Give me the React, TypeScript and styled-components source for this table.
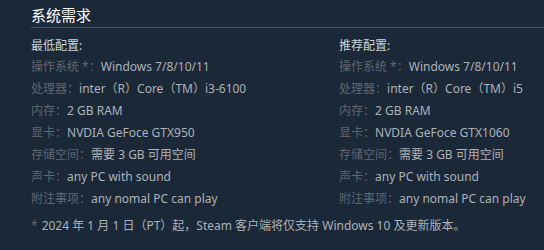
import React from 'react';
import styled, { createGlobalStyle } from 'styled-components';

const GlobalStyle = createGlobalStyle`
  html, body {
    margin: 0;
    padding: 0;
    background: #1b2838;
  }
  body {
    font-family: 'Noto Sans', 'Noto Sans CJK SC', sans-serif;
  }
`;

const Page = styled.div`
  width: 544px;
  height: 250px;
  overflow: hidden;
  background: #1b2838;
  padding: 6px 0 0 31px;
  box-sizing: border-box;
`;

const Title = styled.h2`
  margin: 0;
  padding-bottom: 3px;
  font-size: 15px;
  line-height: 18px;
  font-weight: normal;
  color: #ffffff;
  border-bottom: 1px solid #3d5d77;
`;

const Columns = styled.div`
  display: grid;
  grid-template-columns: 308px 1fr;
  padding-top: 7px;
`;

const Column = styled.div`
  display: flex;
  flex-direction: column;
  white-space: nowrap;
`;

const ColumnHead = styled.div`
  font-size: 12px;
  line-height: 21px;
  color: #c6d4df;
`;

const Row = styled.div`
  font-size: 12px;
  line-height: 22px;
  color: #acb2b8;
`;

const Label = styled.span`
  color: #5f6770;
`;

const Footnote = styled.div`
  margin-top: 5px;
  font-size: 12px;
  line-height: 22px;
  color: #acb2b8;
`;

const Star = styled.span`
  color: #5f6770;
  margin-right: 4px;
`;

type Spec = { label: string; value: string };

const minSpecs: Spec[] = [
  { label: '操作系统 *', value: 'Windows 7/8/10/11' },
  { label: '处理器', value: 'inter（R）Core（TM）i3-6100' },
  { label: '内存', value: '2 GB RAM' },
  { label: '显卡', value: 'NVDIA GeFoce GTX950' },
  { label: '存储空间', value: '需要 3 GB 可用空间' },
  { label: '声卡', value: 'any PC with sound' },
  { label: '附注事项', value: 'any nomal PC can play' },
];

const recSpecs: Spec[] = [
  { label: '操作系统 *', value: 'Windows 7/8/10/11' },
  { label: '处理器', value: 'inter（R）Core（TM）i5' },
  { label: '内存', value: '2 GB RAM' },
  { label: '显卡', value: 'NVDIA GeFoce GTX1060' },
  { label: '存储空间', value: '需要 3 GB 可用空间' },
  { label: '声卡', value: 'any PC with sound' },
  { label: '附注事项', value: 'any nomal PC can play' },
];

const SpecColumn = ({ head, specs }: { head: string; specs: Spec[] }) => (
  <Column>
    <ColumnHead>{head}</ColumnHead>
    {specs.map((s) => (
      <Row key={s.label}>
        <Label>{s.label}：</Label>
        {s.value}
      </Row>
    ))}
  </Column>
);

const App = () => (
  <>
    <GlobalStyle />
    <Page>
      <Title>系统需求</Title>
      <Columns>
        <SpecColumn head="最低配置:" specs={minSpecs} />
        <SpecColumn head="推荐配置:" specs={recSpecs} />
      </Columns>
      <Footnote>
        <Star>*</Star>2024 年 1 月 1 日（PT）起，Steam 客户端将仅支持 Windows 10 及更新版本。
      </Footnote>
    </Page>
  </>
);

export default App;
